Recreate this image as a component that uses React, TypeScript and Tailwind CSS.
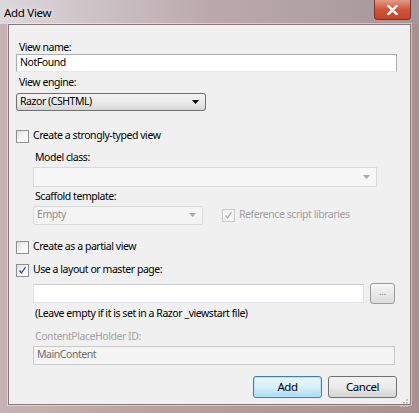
import type { ReactNode } from "react";

const font = { fontFamily: '"Noto Sans", "Open Sans", sans-serif' };

function Check({ checked, disabled }: { checked?: boolean; disabled?: boolean }) {
  return (
    <span
      className={`flex h-[13px] w-[13px] shrink-0 items-center justify-center border ${
        disabled ? "border-[#c9c9c9] bg-[#f4f4f4]" : "border-[#8f8f8f] bg-gradient-to-br from-[#dcdcdc] via-[#f6f6f6] to-[#ffffff]"
      }`}
    >
      {checked && (
        <svg width="9" height="9" viewBox="0 0 9 9">
          <path d="M1.5 4.5 L3.5 7 L7.5 1.2" fill="none" stroke={disabled ? "#b0b0b0" : "#3a4f74"} strokeWidth="1.3" />
        </svg>
      )}
    </span>
  );
}

function Arrow({ light }: { light?: boolean }) {
  return (
    <svg width="7" height="4" viewBox="0 0 7 4" className="shrink-0">
      <path d="M0 0 H7 L3.5 4 Z" fill={light ? "#a8a8a8" : "#000"} />
    </svg>
  );
}

function Label({ children, muted, className = "" }: { children: ReactNode; muted?: boolean; className?: string }) {
  return (
    <div className={`h-[14px] leading-[14px] ${muted ? "text-[#a3a3a3]" : "text-black"} ${className}`}>{children}</div>
  );
}

export default function App() {
  return (
    <div
      className="relative flex h-[413px] w-[419px] flex-col overflow-hidden bg-gradient-to-r from-[#c6b2b4] via-[#b59c9e] to-[#a99092] text-[10.5px] tracking-[-0.45px]"
      style={font}
    >
      {/* title bar */}
      <div className="flex h-[24px] items-start bg-gradient-to-r from-[#dcd8dc] via-[#bba9ad] to-[#a6969a] pl-[4px]">
        <span className="mt-[4px] text-[11.5px] tracking-[-0.3px] text-black [text-shadow:0_0_6px_rgba(255,255,255,0.9)]">Add View</span>
        <button className="ml-auto mr-[8px] flex h-[20px] w-[37px] items-center justify-center rounded-b-[4px] border border-t-0 border-[#7a3326] bg-gradient-to-b from-[#e49a86] via-[#d0553b] to-[#c4452e]">
          <svg width="11" height="10" viewBox="0 0 11 10">
            <path d="M1.5 1 L9.5 9 M9.5 1 L1.5 9" stroke="#fff" strokeWidth="2.4" strokeLinecap="square" />
          </svg>
        </button>
      </div>

      {/* client area */}
      <div className="mx-[8px] flex h-[381px] flex-col border border-[#8c7678] bg-[#f0f0f0] pl-[7px] pr-[13px] pt-[15px] shadow-[0_0_0_1px_rgba(255,255,255,0.45)]">
        <Label className="pl-[3px]">View name:</Label>
        <div className="flex h-[20px] items-center border border-[#abadb3] border-b-[#e3e9ef] bg-white pl-[3px]">
          NotFound
        </div>

        <Label className="mt-[3px] pl-[3px]">View engine:</Label>
        <div className="mt-[4px] flex h-[20px] w-[190px] items-center rounded-[3px] border border-[#707070] bg-gradient-to-b from-[#f2f2f2] via-[#ebebeb] to-[#d6d6d6] pl-[3px] pr-[6px]">
          <span className="flex-1">Razor (CSHTML)</span>
          <Arrow />
        </div>

        <label className="mt-[18px] flex h-[15px] items-center gap-[4px]">
          <Check />
          <span>Create a strongly-typed view</span>
        </label>

        <div className="pl-[17px]">
          <Label className="mt-[6px] pl-[2px]">Model class:</Label>
          <div className="mt-[3px] flex h-[20px] w-[344px] items-center justify-end border border-[#d9d9d9] bg-[#f7f7f7] pr-[6px]">
            <Arrow light />
          </div>

          <Label className="mt-[2px] pl-[2px]">Scaffold template:</Label>
          <div className="mt-[3px] flex items-center">
            <div className="flex h-[19px] w-[170px] items-center rounded-[2px] border border-[#d9d9d9] bg-[#f4f4f4] pl-[3px] pr-[6px] text-[#8c8c8c]">
              <span className="flex-1">Empty</span>
              <Arrow light />
            </div>
            <label className="ml-[19px] flex items-center gap-[4px] text-[#a0a0a0]">
              <Check checked disabled />
              <span>Reference script libraries</span>
            </label>
          </div>
        </div>

        <label className="mt-[15px] flex h-[15px] items-center gap-[4px]">
          <Check />
          <span>Create as a partial view</span>
        </label>
        <label className="mt-[8px] flex h-[15px] items-center gap-[4px]">
          <Check checked />
          <span>Use a layout or master page:</span>
        </label>

        <div className="pl-[17px]">
          <div className="mt-[5px] flex items-center">
            <div className="h-[19px] w-[331px] border border-[#e2e3ea] border-t-[#c9cbd1] bg-white" />
            <button className="ml-[6px] flex h-[21px] w-[25px] items-start justify-center rounded-[3px] border border-[#9a9a9a] bg-gradient-to-b from-[#f6f6f6] to-[#dcdcdc] pt-[3px] text-[9px] leading-[10px] tracking-[0px] text-[#777]">
              ...
            </button>
          </div>
          <Label className="mt-[2px] pl-[2px]">(Leave empty if it is set in a Razor _viewstart file)</Label>

          <Label muted className="mt-[9px] pl-[2px]">ContentPlaceHolder ID:</Label>
          <div className="mt-[3px] flex h-[19px] w-[362px] items-center border border-[#c9c9c9] bg-[#f4f4f4] pl-[3px] text-[#6d6d6d]">
            MainContent
          </div>
        </div>

        <div className="mt-[11px] flex justify-end gap-[6px]">
          <button className="h-[22px] w-[69px] rounded-[3px] border border-[#3c7fb1] bg-gradient-to-b from-[#eaf6fd] via-[#d9f0fc] to-[#a7d9f5] text-[11.5px] shadow-[inset_0_0_0_1px_#b6e3fb]">
            Add
          </button>
          <button className="h-[22px] w-[69px] rounded-[3px] border border-[#707070] bg-gradient-to-b from-[#f2f2f2] via-[#ebebeb] to-[#d3d3d3] text-[11.5px]">
            Cancel
          </button>
        </div>

        {/* size grip */}
        <div className="mt-auto -mr-[12px] mb-[1px] self-end">
          <svg width="10" height="10" viewBox="0 0 10 10">
            {[
              [7, 1], [7, 4], [4, 4], [7, 7], [4, 7], [1, 7],
            ].map(([x, y], i) => (
              <rect key={i} x={x} y={y} width="2" height="2" fill="#c4c4c4" />
            ))}
          </svg>
        </div>
      </div>
    </div>
  );
}
